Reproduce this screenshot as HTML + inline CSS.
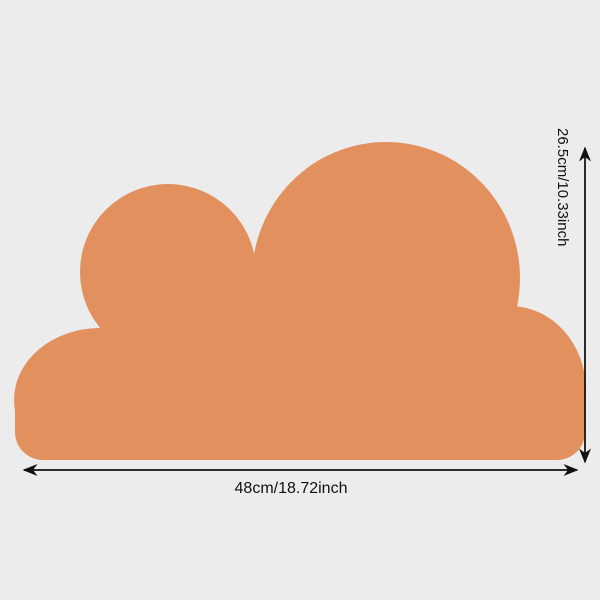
<!DOCTYPE html>
<html><head><meta charset="utf-8"><style>
html,body{margin:0;padding:0;background:#ececec;width:600px;height:600px;overflow:hidden}
svg{position:absolute;left:0;top:0}
</style></head><body>
<svg width="600" height="600" viewBox="0 0 600 600">
<defs><clipPath id="c"><rect x="0" y="0" width="600" height="460"/></clipPath>
<marker id="a" markerWidth="10" markerHeight="8" refX="9" refY="4" orient="auto"><path d="M0,0 L10,4 L0,8 L3,4 Z" fill="#111"/></marker></defs>
<g clip-path="url(#c)" fill="#e3905f">
<ellipse cx="100" cy="400" rx="86" ry="72"/>
<ellipse cx="168" cy="272" rx="88" ry="88"/>
<ellipse cx="386" cy="278" rx="134" ry="136"/>
<ellipse cx="510" cy="390" rx="76" ry="84"/>
<rect x="100" y="270" width="410" height="200"/>
<rect x="15" y="380" width="570" height="80" rx="28"/>
</g>
<line x1="575" y1="470" x2="24" y2="470" stroke="#111" stroke-width="1.5" marker-end="url(#a)"/>
<line x1="24" y1="470" x2="577" y2="470" stroke="#111" stroke-width="1.5" marker-end="url(#a)"/>
<line x1="585" y1="460" x2="585" y2="148" stroke="#111" stroke-width="1.5" marker-end="url(#a)"/>
<line x1="585" y1="150" x2="585" y2="462" stroke="#111" stroke-width="1.5" marker-end="url(#a)"/>
<text x="291" y="493" text-anchor="middle" font-family="Liberation Sans, sans-serif" font-size="16" fill="#111">48cm/18.72inch</text>
<text transform="translate(558,128) rotate(90)" font-family="Liberation Sans, sans-serif" font-size="15" fill="#111">26.5cm/10.33inch</text>
</svg>
</body></html>
